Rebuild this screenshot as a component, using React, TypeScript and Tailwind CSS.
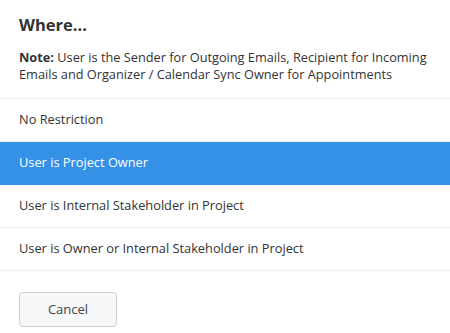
import React from "react";

export default function App() {
  const rows = [
    { label: "No Restriction", active: false },
    { label: "User is Project Owner", active: true },
    { label: "User is Internal Stakeholder in Project", active: false },
    { label: "User is Owner or Internal Stakeholder in Project", active: false },
  ];
  return (
    <div
      className="w-[450px] h-[333px] bg-white text-[#333] overflow-hidden"
      style={{ fontFamily: '"Open Sans", sans-serif' }}
    >
      <div className="px-[19px] pt-[13px] pb-[15px]">
        <div className="text-[16.5px] font-bold leading-[24px]">Where...</div>
        <p className="mt-[12px] text-[12.75px] leading-[17px]">
          <b className="font-bold">Note:</b> User is the Sender for Outgoing Emails, Recipient for Incoming
          Emails and Organizer / Calendar Sync Owner for Appointments
        </p>
      </div>
      <div className="border-t border-[#ebebeb]">
        {rows.map((r) => (
          <div
            key={r.label}
            className={
              r.active
                ? "h-[43px] flex items-center px-[19px] text-[12.8px] bg-[#3591e6] text-white border-b border-[#3591e6]"
                : "h-[43px] flex items-center px-[19px] text-[12.8px] border-b border-[#ebebeb]"
            }
          >
            {r.label}
          </div>
        ))}
      </div>
      <div className="px-[19px] pt-[21px]">
        <button className="w-[98px] h-[35px] rounded-[4px] border border-[#cfcfcf] bg-[#f7f8fa] text-[13px] text-[#444]">
          Cancel
        </button>
      </div>
    </div>
  );
}
